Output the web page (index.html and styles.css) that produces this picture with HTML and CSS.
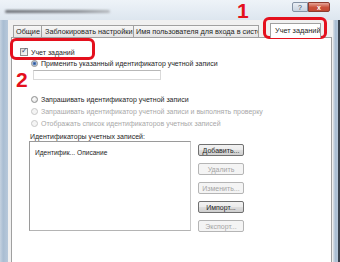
FILE: index.html
```html
<!DOCTYPE html>
<html lang="ru">
<head>
    <meta charset="UTF-8">
    <title>Учет заданий</title>
    <link rel="stylesheet" href="styles.css">
</head>
<body>
    <div class="window">
        <div class="titlebar">
            <div class="title-smudge"></div>
            <div class="caption-btns">
                <div class="cap-btn help">?</div>
                <div class="cap-btn close">x</div>
            </div>
        </div>
        <div class="frame">
            <div class="side left"></div>
            <div class="dialog">
                <div class="tabs">
                    <div class="tab tab-general">Общие</div>
                    <div class="tab tab-lock">Заблокировать настройки</div>
                    <div class="tab tab-cut">Имя пользователя для входа в систе</div>
                    <div class="tab-scroll">‹</div>
                    <div class="tab active">Учет заданий</div>
                </div>
                <div class="panel">
                    <label class="check-row">
                        <span class="checkbox"><span class="tick">✓</span></span>
                        Учет заданий
                    </label>
                    <div class="radio-row first">
                        <span class="radio on"></span>
                        Применить указанный идентификатор учетной записи
                    </div>
                    <div class="field"></div>
                    <div class="radio-row ask">
                        <span class="radio"></span>
                        Запрашивать идентификатор учетной записи
                    </div>
                    <div class="radio-row off">
                        <span class="radio"></span>
                        Запрашивать идентификатор учетной записи и выполнять проверку
                    </div>
                    <div class="radio-row off">
                        <span class="radio"></span>
                        Отображать список идентификаторов учетных записей
                    </div>
                    <div class="list-label">Идентификаторы учетных записей:</div>
                    <div class="accounts">
                        <div class="listview">
                            <div class="list-head">
                                <span class="col-id">Идентифик...</span>
                                <span class="col-desc">Описание</span>
                            </div>
                        </div>
                        <div class="actions">
                            <button class="btn">Добавить...</button>
                            <button class="btn" disabled>Удалить</button>
                            <button class="btn" disabled>Изменить...</button>
                            <button class="btn">Импорт...</button>
                            <button class="btn" disabled>Экспорт...</button>
                        </div>
                    </div>
                </div>
            </div>
            <div class="side right"></div>
        </div>

        <div class="mark mark-1">1</div>
        <div class="ring ring-1"></div>
        <div class="ring ring-2"></div>
        <div class="mark mark-2">2</div>
    </div>
</body>
</html>
```

FILE: styles.css
```css
* {
    box-sizing: border-box;
    margin: 0;
    padding: 0;
}

body {
    font-family: 'Liberation Sans', Arial, sans-serif;
    font-size: 7px;
    color: #1e1e1e;
    background: #fff;
    width: 340px;
    height: 262px;
    overflow: hidden;
}

.window {
    position: relative;
    width: 340px;
    height: 262px;
    display: flex;
    flex-direction: column;
    background: #dfe7f0;
}

/* title bar */
.titlebar {
    height: 20px;
    display: flex;
    justify-content: space-between;
    align-items: flex-start;
    background: linear-gradient(#eef3f8, #dde6ef);
    padding: 0 10px 0 5px;
}

.title-smudge {
    margin-top: 10px;
    width: 105px;
    height: 3px;
    border-radius: 2px;
    background: linear-gradient(90deg, #6c7076, #8a8e94 70%, #b5b9be);
    filter: blur(0.8px);
}

.caption-btns {
    display: flex;
    margin-top: 2px;
}

.cap-btn {
    height: 10px;
    font-size: 7px;
    line-height: 10px;
    text-align: center;
    border: 1px solid #8593a5;
}

.cap-btn.help {
    width: 16px;
    color: #3c4a5c;
    background: linear-gradient(#e9eef4, #c9d4e0);
    border-radius: 2px 0 0 2px;
}

.cap-btn.close {
    width: 22px;
    color: #fff;
    font-weight: bold;
    background: linear-gradient(#e6a597, #c9503a 55%, #c44a33);
    border-color: #8d3b2f;
    border-radius: 0 2px 2px 0;
}

/* frame */
.frame {
    flex: 1;
    display: flex;
}

.side {
    width: 8px;
    background: linear-gradient(90deg, #c5d2e0, #a9bdd2 40%, #b7c8da);
}

.side.right {
    width: 7px;
    border-left: 1px solid #d0d8e0;
    border-right: 2px solid #39424d;
}

.dialog {
    flex: 1;
    display: flex;
    flex-direction: column;
    background: #f0f0f0;
    padding: 1px 1px 0 3px;
}

/* tabs */
.tabs {
    display: flex;
    align-items: flex-end;
    height: 16px;
    padding-left: 2px;
    font-size: 7.3px;
}

.tab {
    height: 12px;
    line-height: 11px;
    padding: 0 2px;
    border: 1px solid #a0a0a0;
    border-bottom: none;
    margin-right: -1px;
    background: linear-gradient(#f7f7f7, #e4e4e4);
    white-space: nowrap;
    overflow: hidden;
    flex: none;
}

.tab-general {
    width: 29px;
}

.tab-lock {
    width: 93px;
    padding-left: 3px;
}

.tab-cut {
    width: 126px;
}

.tab-scroll {
    flex: none;
    width: 12px;
    height: 12px;
    line-height: 11px;
    text-align: center;
    color: #888;
}

.tab.active {
    width: 51px;
    height: 15px;
    line-height: 13px;
    padding: 0 4px;
    background: #fff;
    position: relative;
    z-index: 1;
    margin-bottom: -1px;
}

.panel {
    flex: 1;
    background: #fff;
    border: 1px solid #a0a0a0;
    border-bottom: none;
    padding: 9px 0 0 8px;
}

.check-row {
    display: flex;
    align-items: center;
    gap: 3px;
    height: 10px;
}

.checkbox {
    width: 8px;
    height: 8px;
    border: 1px solid #8f8f8f;
    background: linear-gradient(135deg, #dcdcdc, #fafafa);
    position: relative;
}

.tick {
    position: absolute;
    left: 0;
    top: -3px;
    font-size: 8px;
    color: #3a4f7a;
}

.radio-row {
    display: flex;
    align-items: center;
    gap: 3px;
    height: 10px;
    margin-left: 11px;
}

.radio-row.first {
    margin-top: 1px;
}

.radio-row.ask {
    margin-top: 14px;
}

.radio-row.off {
    color: #a8a8a8;
    margin-top: 2px;
}

.radio {
    width: 7px;
    height: 7px;
    border-radius: 50%;
    border: 1px solid #8e8f8f;
    background: radial-gradient(circle at 40% 40%, #fff, #d6d6d6);
}

.radio.on {
    background: radial-gradient(circle, #2a4f8c 0, #5d86c4 1.5px, #e8e8e8 2.5px);
}

.radio-row.off .radio {
    border-color: #c8c8c8;
    background: #f4f4f4;
}

.field {
    margin: 2px 0 0 13px;
    width: 128px;
    height: 10px;
    border: 1px solid #dadada;
    border-top-color: #b8b8b8;
}

.list-label {
    margin: 5px 0 0 10px;
    height: 8px;
    line-height: 8px;
}

.accounts {
    display: flex;
    gap: 7px;
    margin: 0 0 0 9px;
}

.listview {
    width: 162px;
    height: 90px;
    border: 1px solid #9a9a9a;
    border-right-color: #c9c9c9;
    border-bottom-color: #b4b4b4;
}

.list-head {
    display: flex;
    height: 20px;
    align-items: center;
    padding-left: 5px;
    font-size: 6.6px;
}

.col-id {
    flex: none;
    width: 42px;
}

.actions {
    display: flex;
    flex-direction: column;
    gap: 7px;
    padding-top: 3px;
}

.btn {
    width: 46px;
    height: 12px;
    font-family: inherit;
    font-size: 7px;
    color: #1e1e1e;
    border: 1px solid #707070;
    border-radius: 2px;
    background: linear-gradient(#f2f2f2, #ebebeb 50%, #dddddd 51%, #cfcfcf);
}

.btn:disabled {
    color: #a4a4a4;
    border-color: #b5b5b5;
    background: #f4f4f4;
}

/* annotations */
.mark {
    position: absolute;
    font-family: 'Liberation Sans', Arial, sans-serif;
    font-weight: bold;
    font-size: 21px;
    line-height: 1;
    color: #e4101d;
}

.mark-1 {
    left: 237px;
    top: 0;
}

.mark-2 {
    left: 16px;
    top: 69px;
}

.ring {
    position: absolute;
    border: 3px solid #e4101d;
    border-radius: 6px;
}

.ring-1 {
    left: 263px;
    top: 17px;
    width: 64px;
    height: 22px;
}

.ring-2 {
    left: 10px;
    top: 38px;
    width: 85px;
    height: 22px;
}
```
